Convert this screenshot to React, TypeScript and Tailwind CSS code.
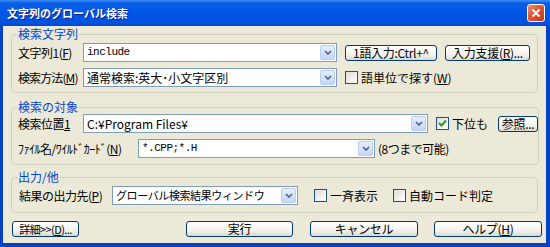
import React from "react";

// XP-style dialog: 文字列のグローバル検索

const Chevron = () => (
  <svg width="8" height="5" viewBox="0 0 8 5">
    <path d="M1 1 L4 4 L7 1" fill="none" stroke="#4d6185" strokeWidth="1.6" />
  </svg>
);

function Combo({
  value,
  width,
  mono,
  tight,
}: {
  value: string;
  width: string;
  mono?: boolean;
  tight?: boolean;
}) {
  return (
    <div
      className={`${width} h-[19px] flex items-stretch border border-[#7f9db9] bg-white shrink-0`}
    >
      <div
        className={`flex-1 flex items-center px-[3px] overflow-hidden whitespace-nowrap text-black ${
          mono
            ? "font-['Liberation_Mono',monospace] text-[11px] tracking-[-0.5px]"
            : tight
            ? "text-[11px] tracking-[-0.4px]"
            : "text-[12px]"
        }`}
      >
        {value}
      </div>
      <div className="w-[15px] m-[1px] flex items-center justify-center rounded-[2px] border border-[#b9cdf5] bg-[linear-gradient(to_bottom,#e6eefc,#c4d5f9)]">
        <Chevron />
      </div>
    </div>
  );
}

function Btn({ children, width }: { children: React.ReactNode; width: string }) {
  return (
    <div
      className={`${width} h-[16px] shrink-0 flex items-center justify-center rounded-[3px] border border-[#003c74] bg-[linear-gradient(to_bottom,#ffffff,#f3f2ee_60%,#dcd8cc)] text-[12px] leading-none tracking-[-0.3px] text-black whitespace-nowrap overflow-hidden`}
    >
      {children}
    </div>
  );
}

function Check({ checked, label }: { checked?: boolean; label: React.ReactNode }) {
  return (
    <div className="flex items-center gap-[3px] shrink-0">
      <div className="w-[13px] h-[13px] border border-[#1c5180] bg-[linear-gradient(135deg,#dcdcd7,#ffffff)] flex items-center justify-center">
        {checked && (
          <svg width="9" height="9" viewBox="0 0 9 9">
            <path d="M1 4 L3.5 6.5 L8 1.5" fill="none" stroke="#21a121" strokeWidth="2" />
          </svg>
        )}
      </div>
      <span className="text-[12px] leading-none whitespace-nowrap">{label}</span>
    </div>
  );
}

function Group({
  title,
  children,
  className,
}: {
  title: string;
  children: React.ReactNode;
  className?: string;
}) {
  return (
    <fieldset
      className={`mx-[8px] border border-[#d0d0bf] rounded-[4px] ${className ?? ""}`}
    >
      <legend className="ml-[5px] px-[1px] text-[12px] leading-[14px] text-[#0046d5]">
        {title}
      </legend>
      {children}
    </fieldset>
  );
}

const U = ({ children }: { children: React.ReactNode }) => (
  <span className="underline underline-offset-1">{children}</span>
);

const label = "text-[12px] leading-none whitespace-nowrap tracking-[-0.5px] shrink-0";

export default function App() {
  return (
    <div className="w-[550px] h-[247px] flex flex-col bg-[#0842c2] font-['Noto_Sans_CJK_JP',sans-serif] text-black overflow-hidden">
      {/* title bar */}
      <div className="h-[26px] shrink-0 flex items-center justify-between pl-[7px] pr-[5px] bg-[linear-gradient(to_bottom,#3d8cf5_0%,#0a5ee8_12%,#0056e6_50%,#0053e0_88%,#0046c8_100%)]">
        <span className="text-[11px] font-bold leading-none text-white [text-shadow:1px_1px_#0a1883]">
          文字列のグローバル検索
        </span>
        <div className="w-[18px] h-[18px] rounded-[3px] border border-white bg-[linear-gradient(135deg,#f08d70,#e2562f_45%,#c23a16)] flex items-center justify-center">
          <svg width="10" height="10" viewBox="0 0 10 10">
            <path d="M1.5 1.5 L8.5 8.5 M8.5 1.5 L1.5 8.5" stroke="white" strokeWidth="2" />
          </svg>
        </div>
      </div>

      {/* body */}
      <div className="flex-1 ml-[3px] mr-[4px] mb-[4px] bg-[#ece9d8] flex flex-col">
        <Group title="検索文字列" className="mt-[1px] pt-[2px] pb-[5px]">
          <div className="flex flex-col gap-[6px] pl-[6px]">
            <div className="flex items-center">
              <span className={`w-[65px] ${label}`}>
                文字列1(<U>F</U>)
              </span>
              <Combo value="include" width="w-[254px]" mono />
              <div className="ml-[8px]">
                <Btn width="w-[92px]">1語入力:Ctrl+^</Btn>
              </div>
              <div className="ml-[8px]">
                <Btn width="w-[85px]">
                  入力支援(<U>R</U>)...
                </Btn>
              </div>
            </div>
            <div className="flex items-center">
              <span className={`w-[65px] ${label} tracking-[-0.9px]`}>
                検索方法(<U>M</U>)
              </span>
              <Combo value="通常検索:英大･小文字区別" width="w-[254px]" />
              <div className="ml-[8px]">
                <Check
                  label={
                    <>
                      語単位で探す(<U>W</U>)
                    </>
                  }
                />
              </div>
            </div>
          </div>
        </Group>

        <Group title="検索の対象" className="mt-[7px] pt-[0px] pb-[6px]">
          <div className="flex flex-col gap-[6px] pl-[6px]">
            <div className="flex items-center">
              <span className={`w-[65px] ${label}`}>
                検索位置<U>1</U>
              </span>
              <Combo value="C:¥Program Files¥" width="w-[345px]" />
              <div className="ml-[8px]">
                <Check checked label="下位も" />
              </div>
              <div className="ml-[10px]">
                <Btn width="w-[40px]">参照...</Btn>
              </div>
            </div>
            <div className="flex items-center">
              <span className={`w-[120px] ${label}`}>
                ﾌｧｲﾙ名/ﾜｲﾙﾄﾞｶｰﾄﾞ(<U>N</U>)
              </span>
              <Combo value="*.CPP;*.H" width="w-[237px]" mono />
              <span className={`ml-[3px] ${label}`}>(8つまで可能)</span>
            </div>
          </div>
        </Group>

        <Group title="出力/他" className="mt-[5px] pt-[2px] pb-[7px]">
          <div className="flex items-center pl-[7px]">
            <span className={`w-[93px] ${label}`}>
              結果の出力先(<U>P</U>)
            </span>
            <Combo value="グローバル検索結果ウィンドウ" width="w-[186px]" tight />
            <div className="ml-[16px]">
              <Check label="一斉表示" />
            </div>
            <div className="ml-[15px]">
              <Check label="自動コード判定" />
            </div>
          </div>
        </Group>

        <div className="flex items-center mt-[8px] pl-[9px]">
          <Btn width="w-[67px]">
            <span className="text-[11px] tracking-[-0.6px]">
              詳細&gt;&gt;(<U>D</U>)...
            </span>
          </Btn>
          <div className="ml-[107px]">
            <Btn width="w-[107px]">実行</Btn>
          </div>
          <div className="ml-[17px]">
            <Btn width="w-[108px]">キャンセル</Btn>
          </div>
          <div className="ml-[16px]">
            <Btn width="w-[108px]">
              ヘルプ(<U>H</U>)
            </Btn>
          </div>
        </div>
      </div>
    </div>
  );
}
